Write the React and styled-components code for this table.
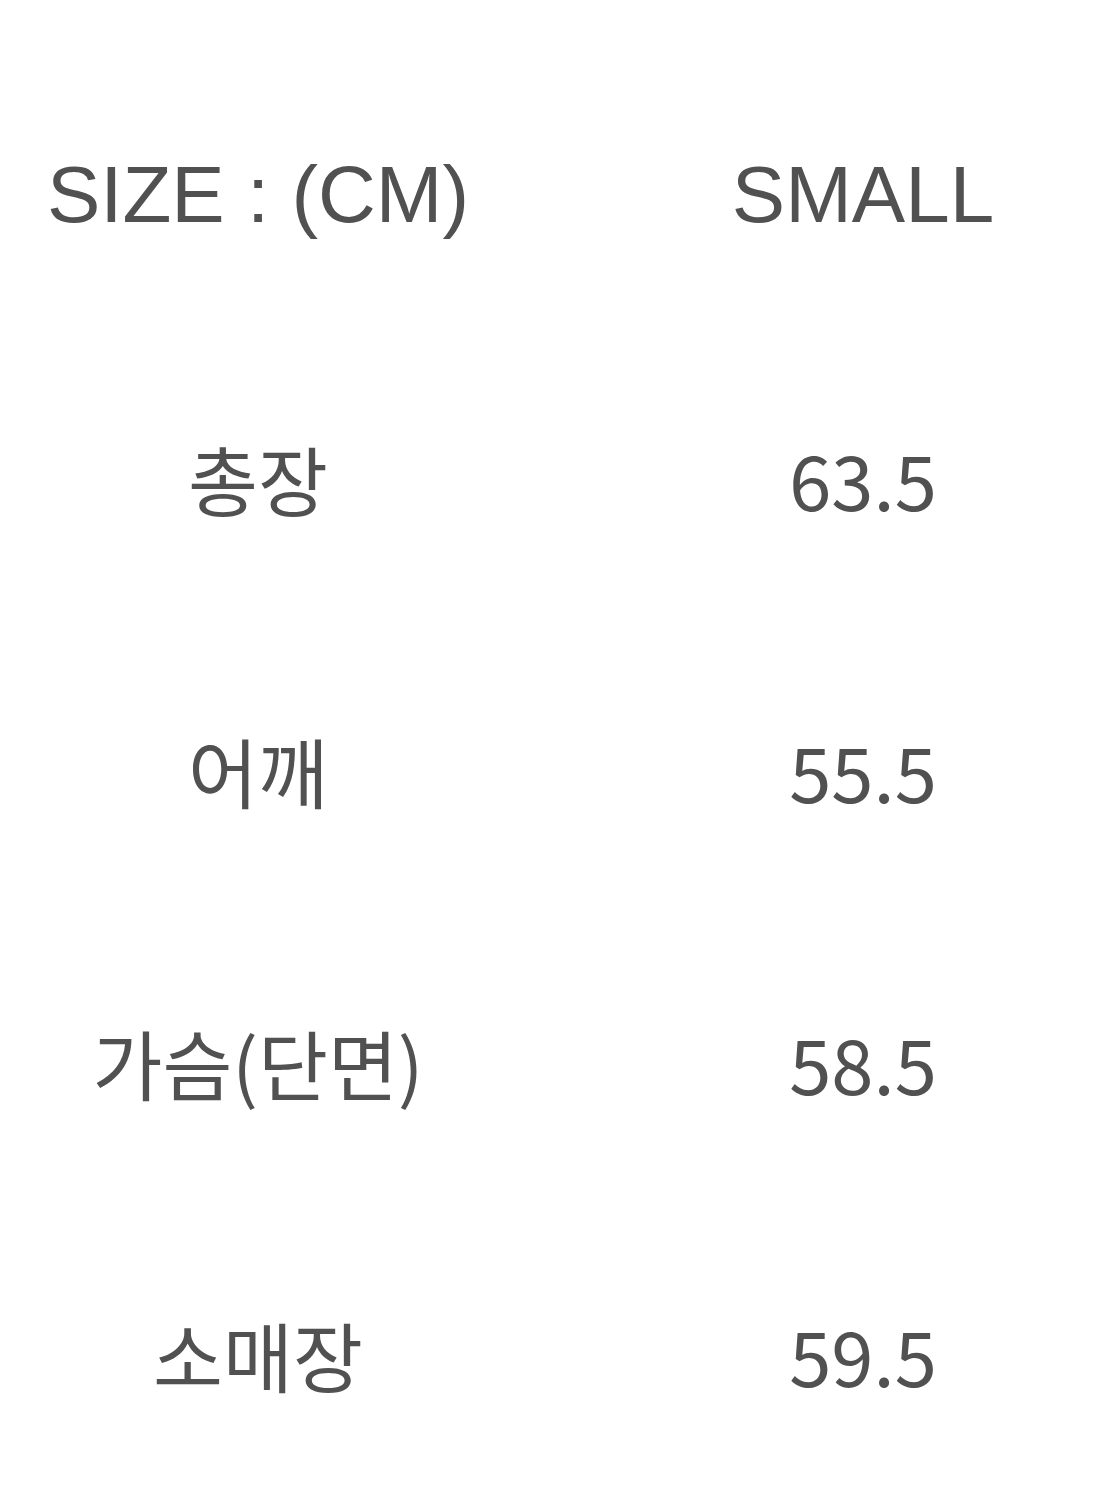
import React from 'react';
import styled, { createGlobalStyle } from 'styled-components';

const GlobalStyle = createGlobalStyle`
  html, body {
    margin: 0;
    padding: 0;
    background: #ffffff;
  }
`;

const Table = styled.section`
  width: 1093px;
  height: 1500px;
  padding-top: 58px;
  box-sizing: border-box;
  display: grid;
  grid-template-columns: 516px 460px;
  grid-template-rows: 274px;
  grid-auto-rows: 292px;
  column-gap: 117px;
  color: #515151;
`;

const Cell = styled.div`
  display: flex;
  align-items: center;
  justify-content: center;
  line-height: 1;
  white-space: nowrap;
  font-family: ${props =>
    props.$head
      ? '"Liberation Sans", Arial, sans-serif'
      : '"Noto Sans CJK KR", "Noto Sans", sans-serif'};
  font-size: ${props => (props.$head ? '80px' : '76px')};
  font-weight: 400;
`;

const rows = [
  { label: '총장', value: '63.5' },
  { label: '어깨', value: '55.5' },
  { label: '가슴(단면)', value: '58.5' },
  { label: '소매장', value: '59.5' },
];

export default function App() {
  return (
    <>
      <GlobalStyle />
      <Table>
        <Cell $head>SIZE : (CM)</Cell>
        <Cell $head>SMALL</Cell>
        {rows.map(row => (
          <React.Fragment key={row.label}>
            <Cell>{row.label}</Cell>
            <Cell>{row.value}</Cell>
          </React.Fragment>
        ))}
      </Table>
    </>
  );
}
